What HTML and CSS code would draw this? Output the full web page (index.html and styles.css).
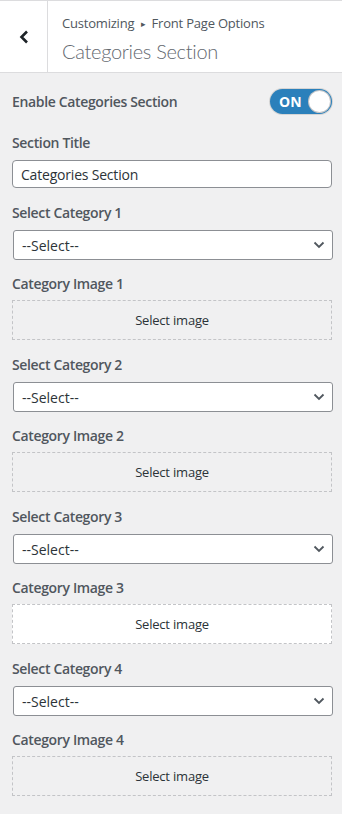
FILE: index.html
```html
<!DOCTYPE html>
<html lang="en">
  <head>
    <meta charset="UTF-8" />
    <meta name="viewport" content="width=device-width, initial-scale=1.0" />
    <title>Categories Section</title>
    <link rel="stylesheet" href="styles.css">
  </head>
  <body>
    <div class="panel-head">
      <button class="back-btn" aria-label="Back">
        <svg width="10" height="14" viewBox="0 0 10 14"><polyline points="8,1.5 2.5,7 8,12.5" fill="none" stroke="#1d2327" stroke-width="2.6"/></svg>
      </button>
      <div class="head-text">
        <div class="crumbs">Customizing <span class="crumb-arrow">▸</span> Front Page Options</div>
        <div class="head-title">Categories Section</div>
      </div>
    </div>

    <div class="controls">
      <div class="control toggle-row">
        <span class="control-title">Enable Categories Section</span>
        <div class="toggle">
          <span class="toggle-label">ON</span>
          <span class="toggle-knob"></span>
        </div>
      </div>

      <div class="control">
        <label class="control-title">Section Title</label>
        <input class="text-input" type="text" value="Categories Section">
      </div>

      <div id="categoryControls"></div>
    </div>

    <script>
      const container = document.getElementById("categoryControls");
      const hovered = 3;

      for (let i = 1; i <= 4; i++) {
        const block = document.createElement("div");
        block.innerHTML = `
          <div class="control">
            <label class="control-title">Select Category ${i}</label>
            <div class="select">
              <span>--Select--</span>
              <svg width="12" height="8" viewBox="0 0 12 8"><polyline points="1.5,1.5 6,6 10.5,1.5" fill="none" stroke="#50575e" stroke-width="1.8"/></svg>
            </div>
          </div>
          <div class="control">
            <label class="control-title image-title">Category Image ${i}</label>
            <button class="image-pick${i === hovered ? " hover" : ""}">Select image</button>
          </div>`;
        container.appendChild(block);
      }
    </script>
  </body>
</html>
```

FILE: styles.css
```css
body {
  margin: 0;
  background: #f0f0f1;
  font-family: "Open Sans", "Noto Sans", sans-serif;
  color: #50575e;
}

.panel-head {
  display: flex;
  height: 71px;
  background: #fff;
  border-top: 1px solid #dcdcde;
  border-bottom: 1px solid #dcdcde;
}

.back-btn {
  width: 48px;
  border: none;
  border-right: 1px solid #dcdcde;
  background: #fff;
  display: flex;
  align-items: center;
  justify-content: center;
  padding: 0;
}

.head-text {
  padding: 12px 0 0 14px;
}

.crumbs {
  font-size: 13px;
  line-height: 20px;
  letter-spacing: -0.2px;
  color: #50575e;
}

.crumb-arrow {
  font-size: 9px;
  margin: 0 3px;
  vertical-align: 1px;
}

.head-title {
  margin-top: 3px;
  font-family: "Lato", "Open Sans", sans-serif;
  font-size: 20px;
  font-weight: 300;
  line-height: 28px;
  letter-spacing: -0.3px;
  color: #646970;
}

.controls {
  padding: 16px 9px 0 12px;
}

.control {
  margin-bottom: 14px;
}

.control-title {
  display: block;
  font-size: 14px;
  font-weight: 600;
  line-height: 20px;
  letter-spacing: -0.35px;
  margin-bottom: 7px;
  color: #50575e;
}

.image-title {
  margin-bottom: 6px;
}

.toggle-row {
  display: flex;
  justify-content: space-between;
  align-items: center;
  margin-bottom: 19px;
  padding-right: 1px;
}

.toggle-row .control-title {
  margin: 0;
}

.toggle {
  position: relative;
  width: 62px;
  height: 25px;
  border-radius: 13px;
  background: #2b80bb;
  box-shadow: 0 0 0 1px #d5d5d5;
  box-sizing: border-box;
}

.toggle-label {
  position: absolute;
  left: 9px;
  top: 0;
  line-height: 25px;
  font-size: 14px;
  font-weight: 700;
  color: #fff;
}

.toggle-knob {
  position: absolute;
  right: 2px;
  top: 2px;
  width: 21px;
  height: 21px;
  border-radius: 50%;
  background: #fff;
  box-shadow: 0 0 0 1px #c3c4c7;
}

.text-input {
  display: block;
  width: calc(100% - 1px);
  height: 28px;
  box-sizing: border-box;
  border: 1px solid #8c8f94;
  border-radius: 4px;
  padding: 0 8px;
  font-family: inherit;
  font-size: 14px;
  letter-spacing: -0.2px;
  color: #2c3338;
  background: #fff;
  margin-bottom: 15px;
}

.select {
  display: flex;
  align-items: center;
  justify-content: space-between;
  height: 30px;
  margin-left: 1px;
  box-sizing: border-box;
  border: 1px solid #8c8f94;
  border-radius: 3px;
  padding: 0 7px 0 8px;
  background: #fff;
  font-size: 14px;
  color: #2c3338;
}

.image-pick {
  display: block;
  width: calc(100% - 1px);
  height: 40px;
  border: 1px dashed #c3c4c7;
  border-radius: 0;
  background: #f0f0f1;
  font-family: inherit;
  font-size: 13px;
  letter-spacing: -0.2px;
  color: #2c3338;
  margin-bottom: 15px;
}

.image-pick.hover {
  background: #fff;
}
```
